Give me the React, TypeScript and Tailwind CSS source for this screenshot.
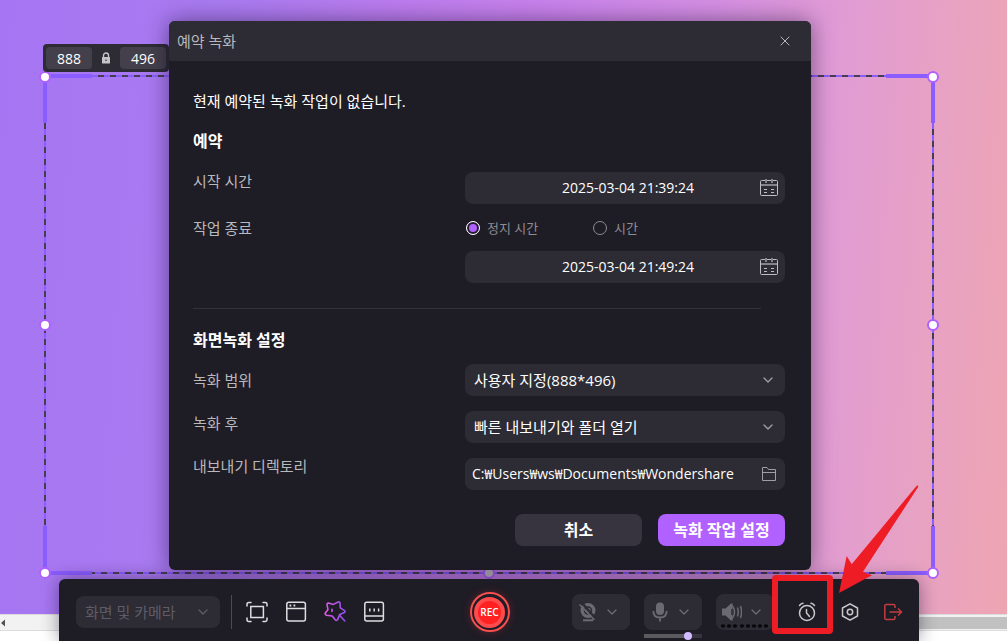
import { useState } from "react";
import { ChevronDown, X } from "lucide-react";

const handles = [
    "left-0 top-px bg-white",
    "left-full top-px bg-white",
    "left-0 top-1/2 bg-white",
    "left-full top-1/2 bg-white",
    "left-0 top-full bg-white",
    "left-1/2 top-full bg-[#c4c2c6]",
    "left-full top-full bg-white",
];

const App: React.FC = () => (
    <div className="relative h-screen w-full overflow-hidden bg-white font-['Open_Sans','Noto_Sans_CJK_KR',sans-serif]">
        <Wallpaper />
        <CaptureRegion />
        <ScheduleDialog />
        <RecorderBar />
        <Callout />
    </div>
);

const Wallpaper: React.FC = () => (
    <div className="flex h-full flex-col">
        <div className="flex-1 bg-[linear-gradient(94deg,#a675f3_0%,#a97bf0_22%,#bc7cee_38%,#c982ec_52%,#d58fe3_68%,#e09bd5_80%,#e8a2c2_91%,#eea5b2_100%)]" />
        <div className="flex h-[17px] items-center justify-between border-y border-[#dcdcdc] bg-[#f2f2f2]">
            <svg className="h-2 w-2" viewBox="0 0 8 8">
                <path d="M5 0.5v7L1 4z" fill="#505050" />
            </svg>
            <div className="h-3 w-36 bg-[#c1c1c1]" />
        </div>
        <div className="h-[10px] bg-white" />
    </div>
);

const CaptureRegion: React.FC = () => (
    <div className="absolute bottom-[68px] left-[45px] right-[74px] top-[76px]">
        <svg className="absolute inset-0 h-full w-full overflow-visible">
            <g stroke="#8b5cff" strokeWidth="2">
                <line x1="0" y1="0" x2="100%" y2="0" />
                <line x1="0" y1="100%" x2="100%" y2="100%" />
                <line x1="0" y1="0" x2="0" y2="100%" />
                <line x1="100%" y1="0" x2="100%" y2="100%" />
            </g>
            <g stroke="#443f50" strokeWidth="2" strokeDasharray="6 6">
                <line x1="0" y1="0" x2="100%" y2="0" strokeDashoffset="7" />
                <line x1="0" y1="100%" x2="100%" y2="100%" strokeDashoffset="4" />
                <line x1="0" y1="0" x2="0" y2="100%" strokeDashoffset="1" />
                <line x1="100%" y1="0" x2="100%" y2="100%" strokeDashoffset="7" />
            </g>
        </svg>
        <div className="absolute -left-0.5 -top-0.5 h-[49px] w-[49px] border-l-4 border-t-4 border-[#8b5cff]" />
        <div className="absolute -right-0.5 -top-0.5 h-[49px] w-[49px] border-r-4 border-t-4 border-[#8b5cff]" />
        <div className="absolute -bottom-0.5 -left-0.5 h-[49px] w-[49px] border-b-4 border-l-4 border-[#8b5cff]" />
        <div className="absolute -bottom-0.5 -right-0.5 h-[49px] w-[49px] border-b-4 border-r-4 border-[#8b5cff]" />
        {handles.map((pos) => (
            <span
                key={pos}
                className={`absolute h-3 w-3 -translate-x-1/2 -translate-y-1/2 rounded-full border-2 border-[#b061ff] ${pos}`}
            />
        ))}
        <div className="absolute -left-0.5 -top-8 flex items-center gap-2 rounded bg-[#2d2b34] p-[3px]">
            <SizeBox label="너비" value="888" />
            <svg className="h-3 w-3" viewBox="0 0 12 12" fill="none">
                <path d="M3.5 5.5V3.5a2.5 2.5 0 0 1 5 0v2" stroke="#c4c3c7" strokeWidth="1.4" />
                <rect x="2" y="5" width="8" height="6.5" rx="0.5" fill="#c4c3c7" />
                <circle cx="6" cy="8.2" r="0.8" fill="#2d2b34" />
            </svg>
            <SizeBox label="높이" value="496" />
        </div>
    </div>
);

interface SizeBoxProps {
    label: string;
    value: string;
}

const SizeBox: React.FC<SizeBoxProps> = ({ label, value }) => (
    <input
        aria-label={label}
        defaultValue={value}
        className="h-[22px] w-[46px] rounded bg-[#433f4b] text-center text-sm text-white outline-none"
    />
);

const ScheduleDialog: React.FC = () => {
    const [endMode, setEndMode] = useState("stop");

    return (
        <div
            role="dialog"
            aria-labelledby="dialog-title"
            className="absolute left-[169px] right-[196px] top-[21px] overflow-hidden rounded-md bg-[#1e1c25] text-[15px] leading-5 text-[#b9b8bc] shadow-[0_0_22px_rgba(20,10,40,0.5)]"
        >
            <div className="flex h-10 items-center justify-between bg-[#2d2b34] pl-2 pr-[18px]">
                <h1 id="dialog-title">예약 녹화</h1>
                <button type="button" aria-label="닫기">
                    <X className="h-4 w-4" strokeWidth={1.5} />
                </button>
            </div>

            <form className="pb-6 pl-6 pr-[26px] pt-[30px]" onSubmit={(e) => e.preventDefault()}>
                <p className="text-white">현재 예약된 녹화 작업이 없습니다.</p>
                <h2 className="mt-5 text-base leading-5 font-bold text-white">예약</h2>

                <div className="mt-5 flex justify-between">
                    <div className="flex flex-col gap-[27px]">
                        <label htmlFor="start-time">시작 시간</label>
                        <span id="end-label">작업 종료</span>
                    </div>
                    <div className="flex w-80 flex-col gap-[14px] pt-px">
                        <DateField id="start-time" label="시작 시간" value="2025-03-04 21:39:24" />
                        <div
                            role="radiogroup"
                            aria-labelledby="end-label"
                            className="flex h-[19px] items-center text-[13px] text-[#8e8c93]"
                        >
                            <div className="w-[127px]">
                                <RadioOption
                                    label="정지 시간"
                                    checked={endMode === "stop"}
                                    onChange={() => setEndMode("stop")}
                                />
                            </div>
                            <RadioOption
                                label="시간"
                                checked={endMode === "duration"}
                                onChange={() => setEndMode("duration")}
                            />
                        </div>
                        <DateField id="end-time" label="종료 시간" value="2025-03-04 21:49:24" />
                    </div>
                </div>

                <hr className="mr-6 mt-[25px] border-[#33313a]" />

                <h2 className="mt-[21px] text-base leading-5 font-bold text-white">화면녹화 설정</h2>

                <div className="mt-[14px] flex justify-between">
                    <div className="flex flex-col gap-[23px] pt-[6px]">
                        <label htmlFor="range">녹화 범위</label>
                        <label htmlFor="after">녹화 후</label>
                        <label htmlFor="directory">내보내기 디렉토리</label>
                    </div>
                    <div className="flex w-80 flex-col gap-[15px]">
                        <SelectField id="range" value="사용자 지정(888*496)" />
                        <SelectField id="after" value="빠른 내보내기와 폴더 열기" />
                        <div className="flex h-8 items-center rounded-lg bg-[#2d2b34] pl-[7px] pr-2">
                            <input
                                id="directory"
                                defaultValue="C:₩Users₩ws₩Documents₩Wondershare"
                                className="min-w-0 flex-1 text-sm text-white outline-none"
                            />
                            <button type="button" aria-label="폴더 선택">
                                <FolderIcon />
                            </button>
                        </div>
                    </div>
                </div>

                <div className="mt-6 flex justify-end gap-4 text-base font-bold text-white">
                    <button type="button" className="h-8 w-[127px] rounded-lg bg-[#37343f]">
                        취소
                    </button>
                    <button type="submit" className="h-8 w-[127px] rounded-lg bg-[#b061ff]">
                        녹화 작업 설정
                    </button>
                </div>
            </form>
        </div>
    );
};

interface DateFieldProps {
    id: string;
    label: string;
    value: string;
}

const DateField: React.FC<DateFieldProps> = ({ id, label, value }) => (
    <div className="flex h-8 items-center rounded-lg bg-[#2d2b34] pl-8 pr-[6px]">
        <input
            id={id}
            aria-label={label}
            defaultValue={value}
            className="min-w-0 flex-1 text-center text-sm text-white outline-none"
        />
        <button type="button" aria-label="달력 열기">
            <CalendarIcon />
        </button>
    </div>
);

interface RadioOptionProps {
    label: string;
    checked: boolean;
    onChange: () => void;
}

const RadioOption: React.FC<RadioOptionProps> = ({ label, checked, onChange }) => (
    <label className="flex items-center gap-[7px] pl-px">
        <input
            type="radio"
            name="end-mode"
            checked={checked}
            onChange={onChange}
            className="h-[14px] w-[14px] appearance-none rounded-full border border-[#8e8c93] checked:border-white checked:bg-[#b061ff] checked:shadow-[inset_0_0_0_2px_#1e1c25]"
        />
        {label}
    </label>
);

interface SelectFieldProps {
    id: string;
    value: string;
}

const SelectField: React.FC<SelectFieldProps> = ({ id, value }) => (
    <div className="relative">
        <select
            id={id}
            className="block h-8 w-full appearance-none rounded-lg bg-[#2d2b34] pl-[9px] pr-8 text-[15px] text-white outline-none"
        >
            <option>{value}</option>
        </select>
        <ChevronDown className="pointer-events-none absolute right-[9px] top-2 h-4 w-4 text-[#a09ea5]" />
    </div>
);

const CalendarIcon: React.FC = () => (
    <svg className="h-5 w-5" viewBox="0 0 20 20" fill="none" stroke="#bdbcc0">
        <rect x="1.5" y="2.5" width="17" height="15" rx="1" />
        <path d="M2 7h16" stroke="#85838a" strokeWidth="2" />
        <path d="M7 1v4M13 1v4" stroke="#85838a" strokeWidth="2" />
        <path d="M5 11.5h3M12 11.5h3M5 14.5h3M12 14.5h3" />
    </svg>
);

const FolderIcon: React.FC = () => (
    <svg className="h-4 w-4" viewBox="0 0 16 16" fill="none" stroke="#a09ea5">
        <path d="M1.5 14.5v-13H6l1.5 2h7v11zM1.5 6.5h13" />
    </svg>
);

const RecorderBar: React.FC = () => (
    <div className="absolute bottom-0 left-[59px] right-[88px] grid h-[62px] grid-cols-[1fr_auto_1fr] items-center rounded-t-md bg-[#1e1c25] pl-[17px] pr-4 pt-1 shadow-[0_0_18px_rgba(20,10,40,0.45)]">
        <div className="flex items-center">
            <div className="relative">
                <select
                    aria-label="녹화 소스"
                    className="block h-8 w-36 appearance-none rounded-lg bg-[#2d2b34] pl-[9px] text-[15px] text-[#5f5c66] outline-none"
                >
                    <option>화면 및 카메라</option>
                </select>
                <ChevronDown className="pointer-events-none absolute right-[9px] top-2 h-4 w-4 text-[#5f5c66]" />
            </div>
            <div className="ml-[11px] h-[34px] w-px bg-[#4b4953]" />
            <div className="ml-[14px] flex gap-[17px]">
                <button type="button" aria-label="녹화 영역">
                    <svg className="h-[22px] w-[22px]" viewBox="0 0 22 22" fill="none" stroke="#dedde0" strokeWidth="1.5" strokeLinecap="round">
                        <path d="M1 5V3.2Q1 1.5 2.7 1.5H5M17 1.5h2.3Q21 1.5 21 3.2V5M21 17v1.8q0 1.7-1.7 1.7H17M5 20.5H2.7Q1 20.5 1 18.8V17" />
                        <rect x="4.8" y="5.5" width="12.6" height="11" />
                    </svg>
                </button>
                <button type="button" aria-label="창">
                    <svg className="h-[22px] w-[22px]" viewBox="0 0 22 22" fill="none" stroke="#dedde0" strokeWidth="1.5">
                        <rect x="1.8" y="1.3" width="18.6" height="18.6" rx="2" />
                        <path d="M2 7.5h18.5" />
                        <path d="M4.5 4.5h1.8M8.5 4.5h1.8" strokeWidth="2" />
                    </svg>
                </button>
                <button type="button" aria-label="효과">
                    <svg className="h-[22px] w-[22px]" viewBox="0 0 22 22" fill="none" strokeWidth="1.6" strokeLinejoin="round" strokeLinecap="round">
                        <defs>
                            <linearGradient id="wand" x1="0" y1="0" x2="22" y2="0" gradientUnits="userSpaceOnUse">
                                <stop offset="0" stopColor="#e45be6" />
                                <stop offset="1" stopColor="#8b4df0" />
                            </linearGradient>
                        </defs>
                        <g stroke="url(#wand)">
                            <path d="M4.4 2L9.3 3.4L14.3 1Q16 .6 16 2.2L16.3 6.8L20.6 9.6Q21.6 10.8 20.4 11.6L15.8 13.4L13.6 18.6Q12.4 20.2 11.2 18.8L8.2 15L2.4 14.2Q.6 13.4 1.4 12L4 8.6L3 3.6Q3 2 4.4 2Z" />
                            <path d="M15.8 14.5l5 5.5M8 8.2v2.2" />
                        </g>
                    </svg>
                </button>
                <button type="button" aria-label="자막">
                    <svg className="h-[22px] w-[22px]" viewBox="0 0 22 22" fill="none" stroke="#dedde0" strokeWidth="1.5">
                        <rect x="1.8" y="1.3" width="18.6" height="18.6" rx="2" />
                        <path d="M2 15h18.5M6.8 7.5v3M11.2 7.5v3M15.6 7.5v3" />
                    </svg>
                </button>
            </div>
        </div>

        <button
            type="button"
            className="flex h-10 w-10 items-center justify-center rounded-full border-2 border-[#f74f50] shadow-[0_0_8px_rgba(255,60,60,0.25)]"
        >
            <span className="flex h-[31px] w-[31px] items-center justify-center rounded-full border-4 border-[#ff4b4c] bg-[#ff2122] text-[10px] font-semibold text-white">
                REC
            </span>
        </button>

        <div className="flex items-center justify-end gap-[23px]">
            <div className="flex gap-[14px]">
                <DeviceButton label="카메라">
                    <svg className="h-5 w-5" viewBox="0 0 20 20" fill="none" stroke="#6b6971" strokeWidth="2">
                        <circle cx="10" cy="8.5" r="7.5" fill="#6b6971" stroke="none" />
                        <circle cx="10" cy="8.5" r="3.5" stroke="#2d2b34" strokeWidth="1.5" />
                        <path d="M5 18.3h10" />
                        <path d="M3.5 0.5l15 17" stroke="#2d2b34" strokeWidth="2.5" />
                        <path d="M1.5 2.5l15 15.5" strokeWidth="1.5" />
                    </svg>
                </DeviceButton>
                <div className="relative">
                    <DeviceButton label="마이크">
                        <svg className="h-5 w-5" viewBox="0 0 20 20" fill="none" stroke="#6b6971" strokeWidth="1.8">
                            <rect x="6" y="0.5" width="8" height="12.5" rx="4" fill="#6b6971" stroke="none" />
                            <path d="M3.3 9q0 6.5 6.7 6.5T16.7 9M10 15v4.5" />
                        </svg>
                    </DeviceButton>
                    <input
                        type="range"
                        aria-label="마이크 볼륨"
                        defaultValue={80}
                        className="absolute left-0 top-[38px] h-2 w-full appearance-none bg-[linear-gradient(to_right,#5b5a5f_75%,#37343f_75%)] bg-[length:100%_4px] bg-center bg-no-repeat [&::-webkit-slider-thumb]:h-2 [&::-webkit-slider-thumb]:w-2 [&::-webkit-slider-thumb]:appearance-none [&::-webkit-slider-thumb]:rounded-full [&::-webkit-slider-thumb]:bg-[#d2bcff]"
                    />
                </div>
                <div className="relative">
                    <DeviceButton label="스피커">
                        <svg className="h-5 w-5" viewBox="0 0 20 20" fill="none" stroke="#6b6971" strokeWidth="1.5">
                            <path d="M0 6.5h3.5L9 1.5h1.5v17H9l-5.5-5H0z" fill="#6b6971" stroke="none" />
                            <path d="M9 2.5q3.5 3 3.5 7.5T9 17.5M15.5 5.5q1.5 4.5 0 9M18.5 4q2 6 0 12" />
                            <path d="M10 7v6" stroke="#2d2b34" />
                        </svg>
                    </DeviceButton>
                    <svg className="absolute bottom-0.5 left-[5px] h-1 w-12" viewBox="0 0 48 4">
                        {[2, 8, 14, 21, 27, 33, 39, 45].map((x) => (
                            <ellipse key={x} cx={x} cy="2" rx="2.2" ry="1.7" fill="#09080c" />
                        ))}
                    </svg>
                </div>
            </div>
            <button type="button" aria-label="예약 녹화">
                <svg className="h-5 w-5" viewBox="0 0 20 20" fill="none" stroke="#c9c8cc" strokeWidth="1.5" strokeLinecap="round">
                    <circle cx="10" cy="11" r="7.5" />
                    <path d="M9.5 7.5v3.5l3 3.5M2.5 3.5q1.5-2 3.5-2.2M17.5 3.5q-1.5-2-3.5-2.2" />
                </svg>
            </button>
            <button type="button" aria-label="설정">
                <svg className="h-5 w-5" viewBox="0 0 20 20" fill="none" stroke="#c9c8cc" strokeWidth="1.5" strokeLinejoin="round">
                    <path d="M10 1.8L17.5 6v8L10 18.2 2.5 14V6z" />
                    <circle cx="10" cy="10" r="2.7" />
                </svg>
            </button>
            <button type="button" aria-label="나가기">
                <svg className="h-5 w-5" viewBox="0 0 20 20" fill="none" stroke="#c23c40" strokeWidth="1.5">
                    <path d="M12 6V4q0-1.5-1.5-1.5H3.3q-1.5 0-1.5 1.5v12q0 1.5 1.5 1.5h7.2q1.5 0 1.5-1.5v-2M6.5 10H18M15 6.5l3.5 3.5-3.5 3.5" />
                </svg>
            </button>
        </div>
    </div>
);

interface DeviceButtonProps {
    label: string;
    children: React.ReactNode;
}

const DeviceButton: React.FC<DeviceButtonProps> = ({ label, children }) => (
    <button
        type="button"
        aria-label={label}
        className="flex h-9 w-[58px] items-center justify-between rounded-lg bg-[#2d2b34] pl-[6px] pr-[10px] text-[#6b6971]"
    >
        {children}
        <ChevronDown className="h-4 w-4" />
    </button>
);

const Callout: React.FC = () => (
    <>
        <div className="pointer-events-none absolute bottom-[7px] right-[174px] h-[59px] w-[61px] rounded-sm border-[6px] border-[#ee1c24]" />
        <svg className="pointer-events-none absolute bottom-[46px] right-[87px] h-[111px] w-[84px]" viewBox="0 0 84 111">
            <path d="M3 109l7.7-37 5 8.3L80.7 1.7q1.5-.7 1.6 1L27 87.7l9 3.6z" fill="#ee1c24" />
        </svg>
    </>
);

export default App;
